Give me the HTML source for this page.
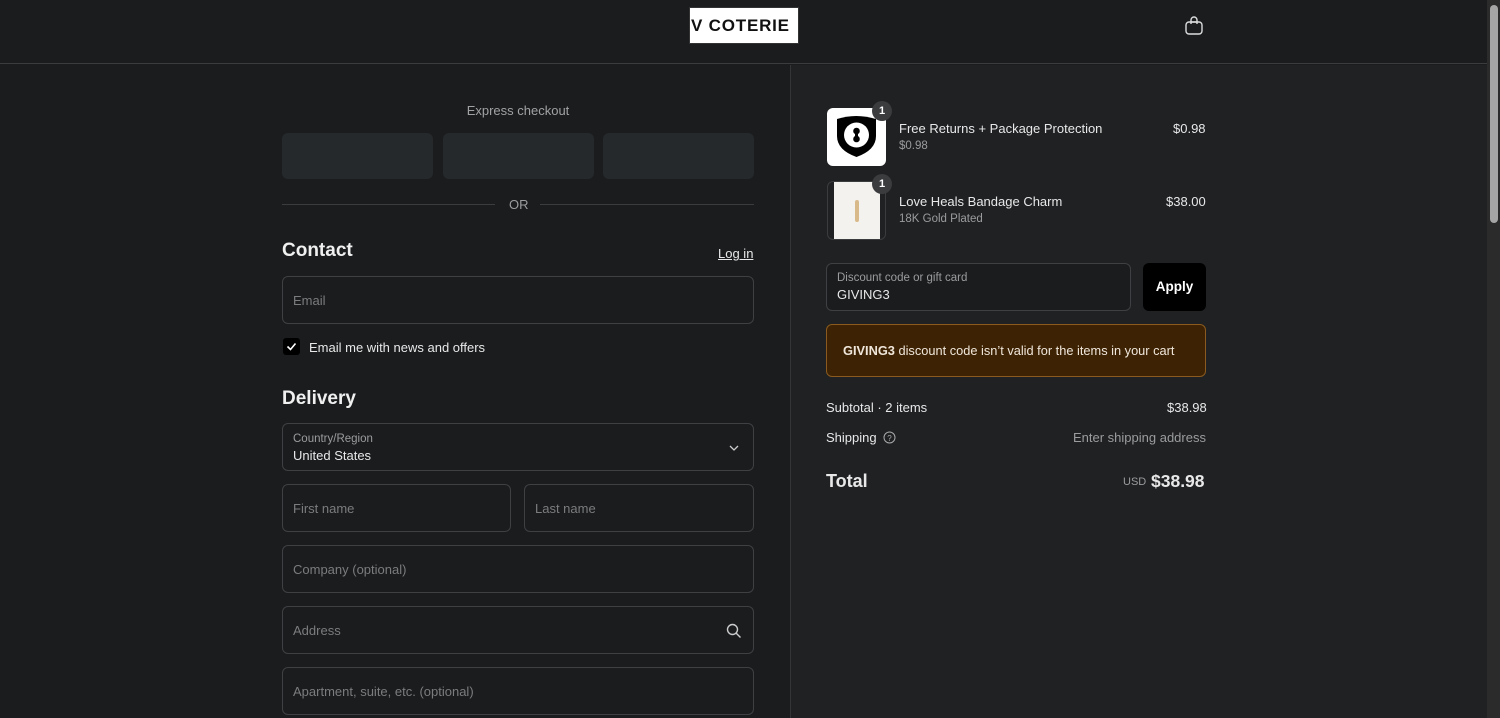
<!DOCTYPE html>
<html><head><meta charset="utf-8"><style>
*{box-sizing:border-box;margin:0;padding:0}
body{width:1500px;height:718px;overflow:hidden;background:#1a1c1e;font-family:"Liberation Sans",sans-serif;color:#e8e8e8;position:relative;font-size:13px}
.abs{position:absolute}
.hdr{left:0;top:0;width:1487px;height:64px;border-bottom:1px solid #3a3c3e;background:#1a1c1e}
.logo{left:689px;top:7px;width:110px;height:37px;background:#fff;border:1px solid #333;color:#111;font-weight:bold;font-size:17px;letter-spacing:0.8px;line-height:35px;padding-left:1px;white-space:nowrap;overflow:hidden}
.right{left:790px;top:65px;width:697px;height:653px;background:#1f2123;border-left:1px solid #333537}
.sb{left:1487px;top:0;width:13px;height:718px;background:#2b2b2b}
.thumb{left:1490px;top:5px;width:8px;height:218px;background:#a5a5a5;border-radius:4px}
.ex{top:133px;width:151px;height:46px;background:#26292b;border-radius:6px}
.inp{border:1px solid #3e4043;border-radius:6px;height:48px;left:282px;width:472px}
.ph{color:#7a7c7e;font-size:13px}
.h{font-size:19px;font-weight:bold;color:#f0f0f0}
.lab{color:#9a9c9e;font-size:11.5px}
.badge{width:20px;height:20px;border-radius:10px;background:#3a3c3e;color:#fff;font-size:11px;text-align:center;line-height:20px;font-weight:bold}
</style></head><body>
<div class="abs hdr"></div>
<div class="abs logo">V COTERIE</div>
<svg class="abs" style="left:1184px;top:15px" width="20" height="21" viewBox="0 0 20 21"><rect x="2" y="7" width="16" height="12" rx="3" fill="none" stroke="#ddd" stroke-width="1.4"/><path d="M7 9V5a3 3 0 0 1 6 0v4" fill="none" stroke="#ddd" stroke-width="1.4"/><path d="M7 7h6" stroke="#ddd" stroke-width="1.4"/></svg>

<div class="abs" style="left:282px;top:103px;width:472px;text-align:center;color:#a0a2a4;font-size:13px">Express checkout</div>
<div class="abs ex" style="left:282px"></div>
<div class="abs ex" style="left:443px"></div>
<div class="abs ex" style="left:603px"></div>
<div class="abs" style="left:282px;top:204px;width:213px;height:1px;background:#3a3c3e"></div>
<div class="abs" style="left:540px;top:204px;width:214px;height:1px;background:#3a3c3e"></div>
<div class="abs" style="left:509px;top:197px;color:#9a9c9e;font-size:13px">OR</div>

<div class="abs h" style="left:282px;top:240px">Contact</div>
<div class="abs" style="left:718px;top:246px;font-size:13px;text-decoration:underline;color:#e8e8e8">Log in</div>
<div class="abs inp" style="top:276px"><span class="abs ph" style="left:10px;top:16px">Email</span></div>
<div class="abs" style="left:283px;top:338px;width:17px;height:17px;background:#000;border-radius:3px"><svg width="17" height="17"><path d="M4.5 8.5l3 3 5-6" fill="none" stroke="#fff" stroke-width="1.6"/></svg></div>
<div class="abs" style="left:309px;top:340px;font-size:13px">Email me with news and offers</div>

<div class="abs h" style="left:282px;top:388px">Delivery</div>
<div class="abs inp" style="top:423px"><span class="abs lab" style="left:10px;top:9px">Country/Region</span><span class="abs" style="left:10px;top:24px;font-size:13px">United States</span>
<svg class="abs" style="left:446px;top:20px" width="10" height="8"><path d="M1 2l4 4 4-4" fill="none" stroke="#ccc" stroke-width="1.3"/></svg></div>
<div class="abs inp" style="top:484px;width:229px"><span class="abs ph" style="left:10px;top:16px">First name</span></div>
<div class="abs inp" style="top:484px;left:524px;width:230px"><span class="abs ph" style="left:10px;top:16px">Last name</span></div>
<div class="abs inp" style="top:545px"><span class="abs ph" style="left:10px;top:16px">Company (optional)</span></div>
<div class="abs inp" style="top:606px"><span class="abs ph" style="left:10px;top:16px">Address</span>
<svg class="abs" style="left:443px;top:16px" width="16" height="16"><circle cx="6.5" cy="6.5" r="5" fill="none" stroke="#ccc" stroke-width="1.4"/><path d="M10 10l4.5 4.5" stroke="#ccc" stroke-width="1.4"/></svg></div>
<div class="abs inp" style="top:667px"><span class="abs ph" style="left:10px;top:16px">Apartment, suite, etc. (optional)</span></div>

<div class="abs right"></div>
<div class="abs" style="left:827px;top:108px;width:59px;height:58px;background:#fff;border-radius:6px"><svg width="59" height="58" viewBox="0 0 59 58"><path d="M10 11q19-6 39 0v17q0 14-19.5 21q-19.5-7-19.5-21z" fill="#000"/><circle cx="29.5" cy="27" r="12.5" fill="#fff"/><circle cx="29.5" cy="23" r="3.3" fill="#000"/><circle cx="29.5" cy="31" r="3.3" fill="#000"/><rect x="28" y="23" width="3" height="8" fill="#000"/></svg></div>
<div class="abs badge" style="left:872px;top:101px">1</div>
<div class="abs" style="left:827px;top:181px;width:59px;height:59px;border:1px solid #3a3c3e;border-radius:6px;overflow:hidden"><div style="position:absolute;left:6px;top:0;width:46px;height:59px;background:#f4f2ef"></div><div style="position:absolute;left:27px;top:18px;width:4px;height:22px;background:#d8b98a;border-radius:2px"></div></div>
<div class="abs badge" style="left:872px;top:174px">1</div>
<div class="abs" style="left:899px;top:121px;font-size:13px">Free Returns + Package Protection</div>
<div class="abs" style="left:899px;top:140px;font-size:11.5px;color:#9a9c9e">$0.98</div>
<div class="abs" style="left:1173px;top:121px;font-size:13px">$0.98</div>
<div class="abs" style="left:899px;top:194px;font-size:13px">Love Heals Bandage Charm</div>
<div class="abs" style="left:899px;top:213px;font-size:11.5px;color:#9a9c9e">18K Gold Plated</div>
<div class="abs" style="left:1166px;top:194px;font-size:13px">$38.00</div>

<div class="abs" style="left:826px;top:263px;width:305px;height:48px;border:1px solid #3e4043;border-radius:6px;background:#1a1c1e"><span class="abs lab" style="left:10px;top:8px">Discount code or gift card</span><span class="abs" style="left:10px;top:23px;font-size:13px">GIVING3</span></div>
<div class="abs" style="left:1143px;top:263px;width:63px;height:48px;background:#000;border-radius:6px;text-align:center;line-height:48px;font-weight:bold;font-size:13.5px;color:#fff">Apply</div>
<div class="abs" style="left:826px;top:324px;width:380px;height:53px;background:#3d2304;border:1px solid #8a5a1e;border-radius:6px;line-height:51px;padding-left:16px;font-size:12.8px;color:#f0e6da"><b>GIVING3</b> discount code isn’t valid for the items in your cart</div>

<div class="abs" style="left:826px;top:400px;font-size:13px">Subtotal · 2 items</div>
<div class="abs" style="left:1167px;top:400px;font-size:13px">$38.98</div>
<div class="abs" style="left:826px;top:430px;font-size:13px">Shipping</div>
<svg class="abs" style="left:883px;top:431px" width="13" height="13"><circle cx="6.5" cy="6.5" r="5.5" fill="none" stroke="#aaa" stroke-width="1"/><text x="6.5" y="10" font-size="8" fill="#aaa" text-anchor="middle" font-family="Liberation Sans">?</text></svg>
<div class="abs" style="left:1073px;top:430px;font-size:13px;color:#9a9c9e">Enter shipping address</div>
<div class="abs" style="left:826px;top:471px;font-size:18px;font-weight:bold">Total</div>
<div class="abs" style="left:1123px;top:476px;font-size:11px;color:#9a9c9e">USD</div>
<div class="abs" style="left:1151px;top:471px;font-size:17.5px;font-weight:bold">$38.98</div>

<div class="abs sb"></div>
<div class="abs thumb"></div>
</body></html>
